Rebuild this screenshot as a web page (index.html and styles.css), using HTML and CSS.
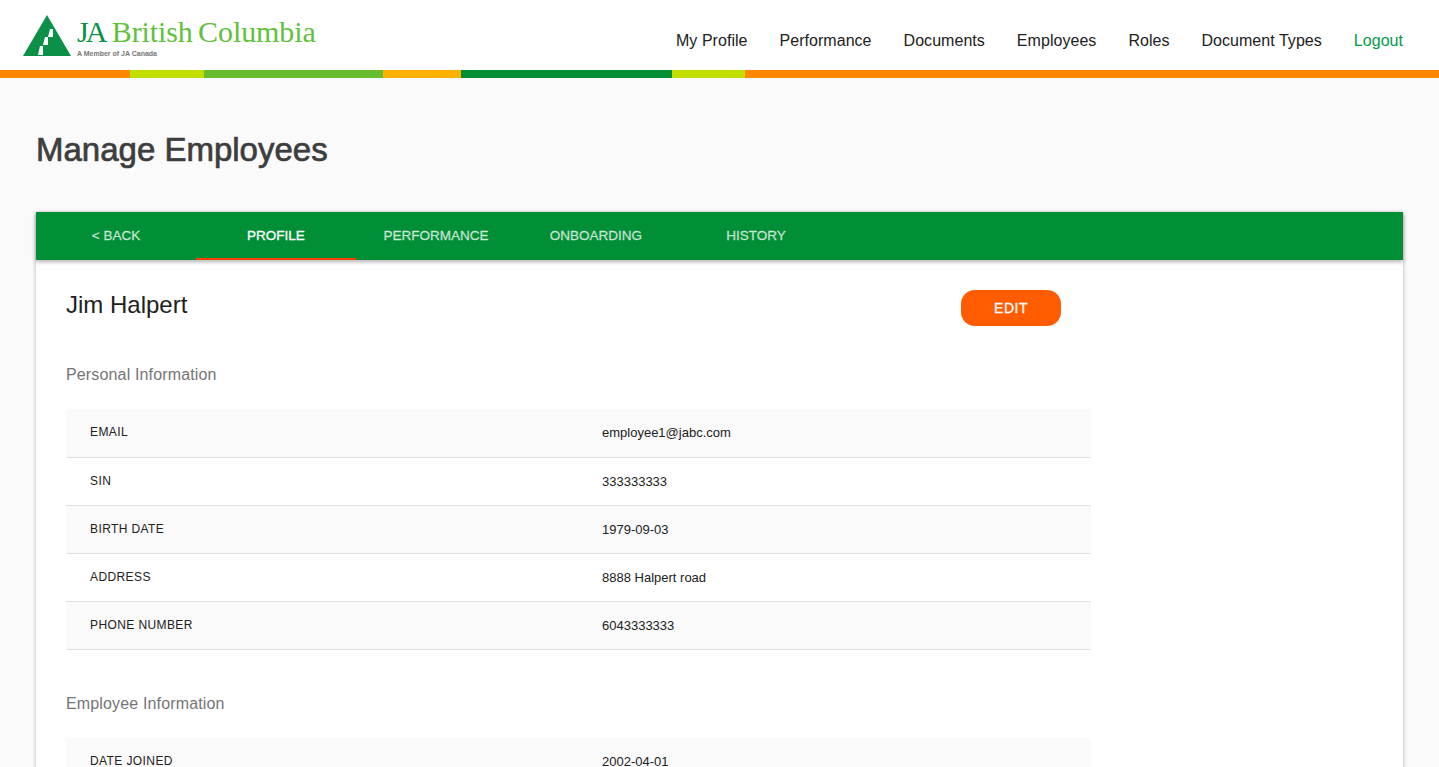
FILE: index.html
```html
<!DOCTYPE html>
<html>
<head>
	<meta charset="utf-8">
	<meta name="viewport" content="width=device-width, initial-scale=1">
	<title>Manage Employees</title>
	<link rel="stylesheet" href="styles.css">
</head>
<body>
	<header class="topbar">
		<a class="logo" href="#">
			<svg class="logo-mark" width="48" height="42" viewBox="0 0 48 42">
				<polygon points="24,0 48,41 0,41" fill="#0a9147"/>
				<polygon points="27,14 30,14 30,22 25,22" fill="#fff"/>
				<polygon points="22,22 25,22 25,30 20,30" fill="#fff"/>
				<polygon points="17,31 20,31 20,40 15,40" fill="#fff"/>
			</svg>
			<div class="logo-text">
				<div class="logo-name"><span class="logo-ja">JA</span> British Columbia</div>
				<div class="logo-sub">A Member of JA Canada</div>
			</div>
		</a>
		<nav class="mainnav">
			<a href="#">My Profile</a>
			<a href="#">Performance</a>
			<a href="#">Documents</a>
			<a href="#">Employees</a>
			<a href="#">Roles</a>
			<a href="#">Document Types</a>
			<a href="#" class="logout">Logout</a>
		</nav>
	</header>
	<div class="stripe">
		<span class="s-orange w130"></span>
		<span class="s-lime w74"></span>
		<span class="s-green w179"></span>
		<span class="s-amber w78"></span>
		<span class="s-dark w211"></span>
		<span class="s-lime w73"></span>
		<span class="s-orange grow"></span>
	</div>

	<main class="page">
		<h1>Manage Employees</h1>
		<section class="card">
			<div class="tabs">
				<a href="#">&lt; Back</a>
				<a href="#" class="active">Profile</a>
				<a href="#">Performance</a>
				<a href="#">Onboarding</a>
				<a href="#">History</a>
			</div>
			<div class="card-body">
				<div class="name-row">
					<h2>Jim Halpert</h2>
					<button class="edit">EDIT</button>
				</div>

				<h3>Personal Information</h3>
				<div class="info">
					<div class="row"><div class="label">Email</div><div class="value">employee1@jabc.com</div></div>
					<div class="row"><div class="label">SIN</div><div class="value">333333333</div></div>
					<div class="row"><div class="label">Birth Date</div><div class="value">1979-09-03</div></div>
					<div class="row"><div class="label">Address</div><div class="value">8888 Halpert road</div></div>
					<div class="row"><div class="label">Phone Number</div><div class="value">6043333333</div></div>
				</div>

				<h3 class="second">Employee Information</h3>
				<div class="info">
					<div class="row"><div class="label">Date Joined</div><div class="value">2002-04-01</div></div>
				</div>
			</div>
		</section>
	</main>
</body>
</html>
```

FILE: styles.css
```css
html, body {
	height: 767px;
	overflow: hidden;
}
body {
	margin: 0;
	background-color: #fafafa;
	font-family: "Liberation Sans", Arial, sans-serif;
	color: #212121;
}
a { text-decoration: none; }

.topbar {
	height: 70px;
	background-color: #fff;
	display: flex;
	justify-content: space-between;
}
.logo {
	display: flex;
	align-items: flex-start;
	padding: 15px 0 0 23px;
}
.logo-text { margin-left: 6px; }
.logo-name {
	font-family: "Liberation Serif", serif;
	font-size: 30px;
	line-height: 34px;
	letter-spacing: -.1px;
	word-spacing: -2px;
	color: #5fc13c;
	white-space: nowrap;
}
.logo-ja {
	color: #0a9147;
	letter-spacing: -3px;
	margin-right: 2px;
}
.logo-sub {
	margin-top: 1px;
	font-size: 7px;
	line-height: 8px;
	font-weight: bold;
	color: #777;
}
.mainnav {
	display: flex;
	gap: 32px;
	padding: 31px 36px 0 0;
	font-size: 16px;
	line-height: 19px;
	letter-spacing: .04px;
}
.mainnav a { color: #212121; }
.mainnav a.logout { color: #009b48; }

.stripe {
	display: flex;
	height: 8px;
}
.s-orange { background-color: #ff8800; }
.s-lime { background-color: #c2e000; }
.s-green { background-color: #67bd30; }
.s-amber { background-color: #ffb000; }
.s-dark { background-color: #008f36; }
.w130 { width: 130px; }
.w74 { width: 74px; }
.w179 { width: 179px; }
.w78 { width: 78px; }
.w211 { width: 211px; }
.w73 { width: 73px; }
.grow { flex: 1; }

.page { padding: 0 36px; }
h1 {
	margin: 0;
	padding-top: 52px;
	height: 82px;
	font-size: 33px;
	line-height: 40px;
	font-weight: normal;
	-webkit-text-stroke: .7px #3d3d3d;
	color: #3d3d3d;
}
.card {
	background-color: #fff;
	box-shadow: 0 1px 4px rgba(0,0,0,.3);
}
.tabs {
	display: flex;
	height: 48px;
	background-color: #008f36;
	box-shadow: 0 2px 4px rgba(0,0,0,.3);
	position: relative;
}
.tabs a {
	width: 160px;
	box-sizing: border-box;
	text-align: center;
	font-size: 13.5px;
	line-height: 47px;
	-webkit-text-stroke: .3px;
	text-transform: uppercase;
	color: rgba(255,255,255,.7);
	border-bottom: 2px solid transparent;
}
.tabs a.active {
	color: #fff;
	border-bottom-color: #ff3d00;
}
.card-body {
	width: 1025px;
	padding: 30px 0 0 30px;
}
.name-row {
	display: flex;
	justify-content: space-between;
	height: 36px;
	padding-right: 30px;
}
h2 {
	margin: 0;
	font-size: 24px;
	line-height: 30px;
	font-weight: normal;
}
.edit {
	width: 100px;
	height: 36px;
	border: 0;
	border-radius: 14px;
	background-color: #ff5c00;
	color: #fff;
	font-family: inherit;
	font-size: 14px;
	letter-spacing: .5px;
	-webkit-text-stroke: .3px;
}
h3 {
	margin: 0;
	padding-top: 39px;
	height: 44px;
	font-size: 16px;
	line-height: 20px;
	letter-spacing: .15px;
	font-weight: normal;
	color: #757575;
}
h3.second { padding-top: 44px; height: 44px; }
.row {
	display: flex;
	height: 48px;
	box-sizing: border-box;
	border-bottom: 1px solid #e0e0e0;
	align-items: center;
	padding-left: 24px;
}
.row:first-child { height: 49px; }
.row:first-child .value { padding-bottom: 2px; }
.row:nth-child(odd) { background-color: #fafafa; }
.label {
	width: 512px;
	padding-bottom: 2px;
	font-size: 12px;
	text-transform: uppercase;
	letter-spacing: .4px;
}
.value { font-size: 13px; }
```
